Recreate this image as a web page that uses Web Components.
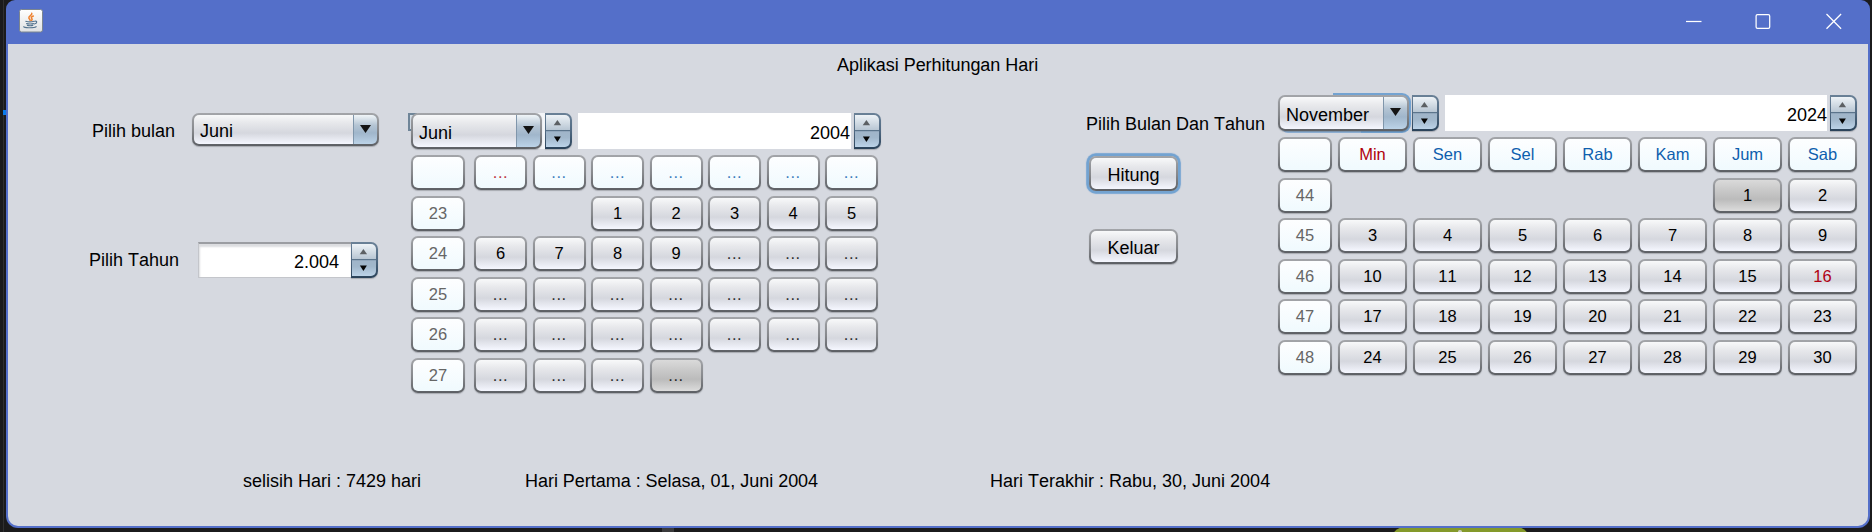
<!DOCTYPE html>
<html lang="id">
<head>
<meta charset="utf-8">
<title>Aplikasi Perhitungan Hari</title>
<style>
html,body{margin:0;height:100%;overflow:hidden;background:#1b1b1c}
body{font:18px/20px "Liberation Sans",Arial,sans-serif;color:#000;font-kerning:none}
</style>
</head>
<body>
<desk-top>
  <app-window>
    <app-form></app-form>
  </app-window>
</desk-top>
<script>
const BTN = 'linear-gradient(#f8f9fa,#e8e9ec 25%,#d5d7de 62%,#f5f7ff)';
const EDGE = 'linear-gradient(#a3a5a9,#85878b 55%,#5c5f64)';
const NAVY = 'linear-gradient(#6a8197,#506982 50%,#2a4259)';
const STEEL = 'linear-gradient(#f0f5f8,#b5c5d4 35%,#a0b6cb 62%,#bcd3e8)';

function define(name, css, html) {
  customElements.define(name, class extends HTMLElement {
    constructor() {
      super();
      const markup = typeof html === 'function' ? html(this) : html;
      this.attachShadow({mode: 'open'}).innerHTML = `<style>*{box-sizing:border-box}:host{box-sizing:border-box}${css}</style>${markup}`;
    }
  });
}

define('desk-top', `
:host{display:flex;position:relative;width:1872px;height:532px;padding:0 2px 4px 6px;background:#1b1b1c}
i{position:absolute}
.line{left:3px;top:0;width:1px;height:532px;background:#303031}
.mark{left:3px;top:110px;width:4px;height:5px;background:#0a7bea}
.green{left:1391px;top:527px;width:139px;height:18px;border-radius:14px 14px 0 0;background:#84992a}
.dot{left:1458px;top:530px;width:4px;height:3px;border-radius:2px;background:#c9cdb8}
.tab{left:662px;top:528px;width:12px;height:4px;background:#3a3a3c}
slot{display:contents}`,
`<i class="line"></i><i class="mark"></i><i class="green"></i><i class="dot"></i><i class="tab"></i><slot></slot>`);

define('title-bar', `
:host{display:flex;align-items:flex-start;height:44px;padding:9px 26px 0 11px}
.java{width:24px;height:24px}
.sys{display:flex;gap:54px;margin-left:auto;padding-top:4px}
.sys svg{width:16px;height:17px;fill:none;stroke:#fff;stroke-width:1.25}`,
`<svg class="java" viewBox="0 0 24 24"><defs><linearGradient id="g" x2="0" y2="1"><stop stop-color="#fff"/><stop offset="1" stop-color="#dfe1e3"/></linearGradient></defs>
<rect x=".5" y=".5" width="23" height="22.5" rx="2" fill="url(#g)" stroke="#7b8590"/>
<g fill="none" stroke-linecap="round"><path d="M12.8 4.3c.9 2-3.9 2.8-2.9 4.9.3.8 1.1 1.2 1.2 2.1M14.3 7c-2.3 1-2.4 1.8-1.4 2.8.5.6.1 1.1-.4 1.5" stroke="#ee8130" stroke-width="1.5"/>
<path d="M6.8 12.3c2 .6 6 .6 8.3 0M7.6 14.6c2 .5 5 .5 6.9 0M8.4 16.4c1.7.4 3.8.4 5.4 0M15.8 12.2c2.6-.5 2.6 2.2-.5 2.8M4.9 17.7c-1.2 1.1 10 1.6 12.2 0" stroke="#55748f" stroke-width="1.15"/></g></svg>
<div class="sys"><svg viewBox="0 0 16 17"><path d="M0 8.5h15.5"/></svg><svg viewBox="0 0 16 17" style="margin-left:-1px"><rect x="1.1" y="1.7" width="13.6" height="13.6" rx="1.4"/></svg><svg viewBox="0 0 16 17" style="margin-left:1px"><path d="M.5 1l14.6 14.8M15.1 1L.5 15.8"/></svg></div>`);

define('app-window', `
:host{display:flex;flex-direction:column;position:relative;width:1864px;height:528px;background:#546fc9;border-radius:9px 9px 12px 12px;overflow:hidden;padding:0 2px 2px}
.body{flex:1;background:#d6d9e0;border-radius:0 0 10px 10px;overflow:hidden}`,
`<title-bar></title-bar><div class="body"><slot></slot></div>`);

define('x-label', `:host{display:block;flex:none;white-space:pre}`, `<slot></slot>`);

define('x-button', `
:host{display:flex;align-items:center;justify-content:center;border:2px solid transparent;border-radius:7px;
background:${BTN} padding-box,${EDGE} border-box;box-shadow:0 1px 1px rgba(60,62,70,.3)}
:host([tone=light]){background:linear-gradient(#fdfeff,#f0fafe) padding-box,${EDGE} border-box}
:host([tone=gray]){background:linear-gradient(#dadada,#cdcdcd 25%,#bbb 62%,#dcdcdc) padding-box,${EDGE} border-box}
:host([focus]){box-shadow:0 0 0 2.5px #73a3d1,0 0 1px 3px #8fb1d5}
:host([wide]){width:89px;height:35px;padding-top:2px}
:host([dots]){letter-spacing:.55px}
:host([dots]) slot{display:block;opacity:.8}`,
`<slot></slot>`);

define('combo-box', `
:host{display:flex;flex:none;border:2px solid transparent;border-radius:7px;overflow:hidden;
background:${BTN} padding-box,${EDGE} border-box;box-shadow:0 1px 1px rgba(60,62,70,.3)}
.t{flex:1;display:flex;align-items:center;padding:3px 0 0 6px}
.a{flex:none;width:26px;margin:-2px -2px -2px 0;border:2px solid transparent;border-left:1px solid #8096ab;border-radius:0 7px 7px 0;
background:${STEEL} padding-box,${NAVY} border-box;display:flex;justify-content:center;align-items:center}
svg{width:11px;height:8px;margin-bottom:2px}`,
`<div class="t"><slot></slot></div><div class="a"><svg viewBox="0 0 11 8"><path d="M0 0h11L5.5 8z" fill="#141414"/></svg></div>`);

define('spin-arrows', `
:host{display:flex;flex:none;flex-direction:column;width:27px;height:36px;border:2px solid transparent;border-left-width:1.5px;border-radius:0 7px 7px 0;
background:linear-gradient(#eef3f7,#b9c7d4 46%,#5b748b 46%,#5b748b 50%,#a0b5c9 52%,#a1b7cb 70%,#bcd3e8) padding-box,${NAVY} border-box;box-shadow:0 1px 1px rgba(60,62,70,.3)}
svg{width:100%;height:32px;display:block}`,
`<svg viewBox="0 0 23 32"><path d="M7.2 10.2h7.4L10.9 5z" fill="#5c6064"/><path d="M7.4 21.5h7L10.9 27z" fill="#050505"/></svg>`);

define('num-field', `
:host{display:flex;height:36px;align-items:flex-start}
.f{flex:1;height:36px;background:#fff;text-align:right;padding:10px var(--inset,1px) 0 0}
:host([framed]) .f{padding-right:12px;border:1px solid #c4c6cb;border-top:2px solid #9b9da2;padding-top:8px;box-shadow:inset 1px 3px 2px #dcdde0;border-right:0}
spin-arrows{margin-left:var(--gap,3px)}`,
`<div class="f"><slot></slot></div><spin-arrows></spin-arrows>`);

define('day-calendar', `
:host{display:block;flex:none}
.head{display:flex;height:36px;margin-bottom:6px;position:relative}
.head combo-box{width:131px;height:36px;position:relative}
.head spin-arrows{margin:0 6px 0 3px}
.head num-field{flex:1}
.week{display:flex;gap:var(--wg);height:35px;margin-bottom:5.6px;font-size:16.5px;line-height:19px}
.week>x-button{width:54px}
.days{display:grid;grid-template-columns:var(--cols);column-gap:var(--cg)}
.under{position:absolute;z-index:0}
.stub{left:-3px;top:0;width:9px;height:18px;border:2px solid #6f8598;border-right:0;background:#d3dde6}
.slit{left:120px;top:0;width:14px;height:36px;background:#f3f5f8}
.ring{left:55px;top:-2px;width:78px;height:40px;border-radius:0 9px 9px 0;background:#73a3d1}
.ring2{left:3px;top:30px;width:80px;height:8px;background:#8fb1d5;border-radius:0 0 0 7px}`,
el => {
  const under = el.getAttribute('kind') === 'start'
    ? '<i class="under stub"></i><i class="under slit"></i>'
    : '<i class="under ring"></i><i class="under ring2"></i>';
  const button = (c, tone, color) => {
    const text = c.replace(/[_!*]/g, '');
    return `<x-button tone="${tone}" ${text === '...' ? 'dots' : ''} style="color:${color}">${text}</x-button>`;
  };
  const weeks = el.getAttribute('rows').split('|').map((row, y) => {
    const [week, ...days] = row.split(' ');
    const cells = days.map((c, x) => {
      if (c === '_') return '<span></span>';
      if (y === 0) return button(c, 'light', x === 0 ? '#b0000c' : '#0e5fae');
      return button(c, c.includes('!') ? 'gray' : 'plain', c.includes('*') ? '#b00012' : '#000');
    }).join('');
    return `<div class="week">${button(week, 'light', '#666')}<div class="days">${cells}</div></div>`;
  }).join('');
  return `<div class="head">${under}<combo-box>${el.getAttribute('month')}</combo-box><spin-arrows></spin-arrows><num-field>${el.getAttribute('year')}</num-field></div>${weeks}`;
});

define('app-form', `
:host{display:block;padding-top:11px}
.title{padding-left:829px;height:40px;letter-spacing:-.04px}
.main{display:flex;align-items:flex-start;height:376px}
.inputs{width:403px;padding-top:18px}
.row{display:flex;align-items:flex-start;padding-right:32px}
.r1{padding-left:84px;height:129px}
.r1 combo-box{width:187px;height:33px;margin-left:auto}
.r1 x-label,.r2 x-label{margin-top:8px}
.r2{padding-left:81px;padding-right:33px}
.r2 num-field{width:180px;margin-left:auto;--gap:0px}
.first{width:470px;margin-top:18px;--cols:repeat(7,53px);--cg:5.5px;--wg:9px}
.actions{width:192px;margin-left:205px;padding-top:19px;display:flex;flex-direction:column}
.actions x-button{margin-left:3px}
.second{width:579px;--cols:repeat(7,69px);--cg:6px;--wg:6px;--inset:0px}
.status{display:flex}
.status x-label:nth-child(1){margin-left:235px;width:282px}
.status x-label:nth-child(2){width:465px;letter-spacing:-.03px}`,
`<div class="title"><x-label>Aplikasi Perhitungan Hari</x-label></div>
<div class="main">
 <div class="inputs">
  <div class="row r1"><x-label>Pilih bulan</x-label><combo-box>Juni</combo-box></div>
  <div class="row r2"><x-label>Pilih Tahun</x-label><num-field framed>2.004</num-field></div>
 </div>
 <day-calendar class="first" kind="start" month="Juni" year="2004" rows="_ ... ... ... ... ... ... ...|23 _ _ 1 2 3 4 5|24 6 7 8 9 ... ... ...|25 ... ... ... ... ... ... ...|26 ... ... ... ... ... ... ...|27 ... ... ... ...! _ _ _"></day-calendar>
 <div class="actions"><x-label>Pilih Bulan Dan Tahun</x-label><x-button wide focus style="margin-top:22px">Hitung</x-button><x-button wide style="margin-top:38px">Keluar</x-button></div>
 <day-calendar class="second" kind="end" month="November" year="2024" rows="_ Min Sen Sel Rab Kam Jum Sab|44 _ _ _ _ _ 1! 2|45 3 4 5 6 7 8 9|46 10 11 12 13 14 15 16*|47 17 18 19 20 21 22 23|48 24 25 26 27 28 29 30"></day-calendar>
</div>
<div class="status"><x-label>selisih Hari : 7429 hari</x-label><x-label>Hari Pertama : Selasa, 01, Juni 2004</x-label><x-label>Hari Terakhir : Rabu, 30, Juni 2004</x-label></div>`);
</script>
</body>
</html>
